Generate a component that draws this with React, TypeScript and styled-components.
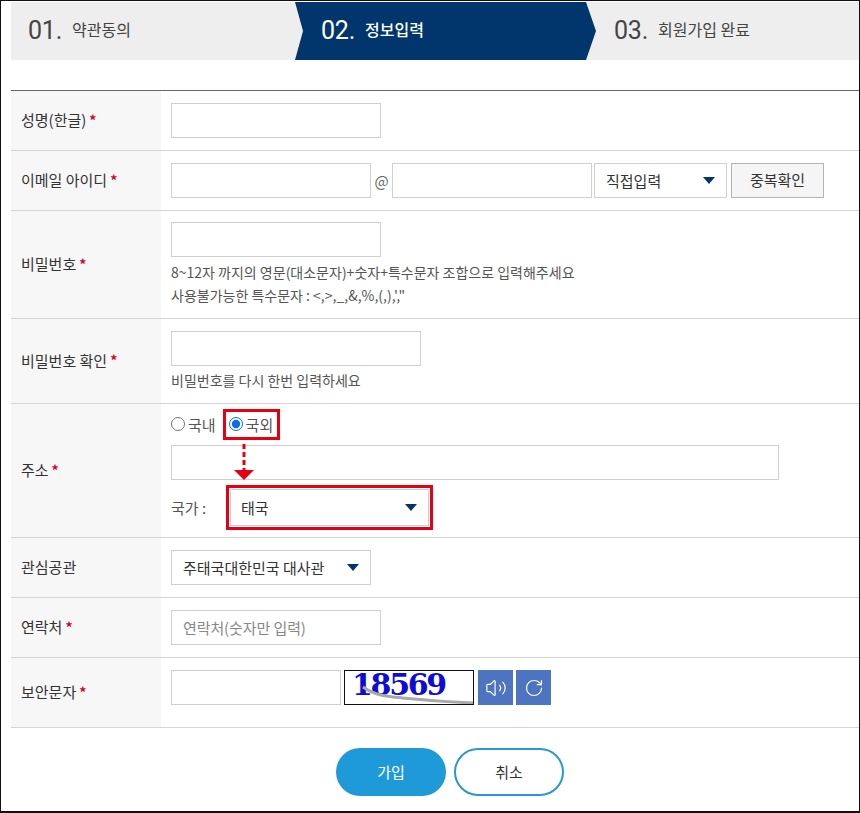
import React from 'react';
import styled, { createGlobalStyle } from 'styled-components';
import { RotateCw, Volume2 } from 'lucide-react';

const KR = `"Noto Sans CJK KR", "Noto Sans", sans-serif`;

const GlobalStyle = createGlobalStyle`
  html, body {
    margin: 0;
    padding: 0;
    background: #fff;
  }
  * {
    box-sizing: border-box;
  }
`;

export default function App() {
  return (
    <Page>
      <GlobalStyle />
      <Steps>
        <Step $width="284px">
          <StepNum>01.</StepNum>
          <StepName>약관동의</StepName>
        </Step>
        <ActiveStep>
          <StepNum>02.</StepNum>
          <ActiveName>정보입력</ActiveName>
        </ActiveStep>
        <LastStep>
          <StepNum>03.</StepNum>
          <StepName>회원가입 완료</StepName>
        </LastStep>
      </Steps>

      <Form>
        <Row $height="60px">
          <Label>성명(한글)<Star>*</Star></Label>
          <Cell>
            <TextInput $width="210px" />
          </Cell>
        </Row>

        <Row $height="60px">
          <Label>이메일 아이디<Star>*</Star></Label>
          <Cell>
            <Inline>
              <TextInput $width="200px" />
              <At>@</At>
              <TextInput $width="200px" />
              <Select $width="133px" $margin="0 4px 0 2px">
                <span>직접입력</span>
                <Arrow />
              </Select>
              <CheckButton>중복확인</CheckButton>
            </Inline>
          </Cell>
        </Row>

        <Row $height="108px">
          <Label>비밀번호<Star>*</Star></Label>
          <Cell>
            <TextInput $width="210px" />
            <Help $top="4px">8~12자 까지의 영문(대소문자)+숫자+특수문자 조합으로 입력해주세요</Help>
            <Help>사용불가능한 특수문자 : &lt;,&gt;,_,&amp;,%,(,),',"</Help>
          </Cell>
        </Row>

        <Row $height="85px">
          <Label>비밀번호 확인<Star>*</Star></Label>
          <Cell>
            <TextInput $width="250px" />
            <Help $top="3px">비밀번호를 다시 한번 입력하세요</Help>
          </Cell>
        </Row>

        <Row $height="134px">
          <Label>주소<Star>*</Star></Label>
          <AddressCell>
            <RadioLine>
              <RadioLabel>
                <Radio type="radio" name="addr" />
                국내
              </RadioLabel>
              <RadioLabel>
                <Radio type="radio" name="addr" defaultChecked />
                국외
              </RadioLabel>
              <RadioMark />
            </RadioLine>
            <TextInput $width="608px" />
            <CountryLine>
              <CountryLabel>국가 :</CountryLabel>
              <CountryMark>
                <Select $width="199px" $height="37px">
                  <CountryName>태국</CountryName>
                  <Arrow />
                </Select>
              </CountryMark>
            </CountryLine>
            <DownArrow width="20" height="37" viewBox="0 0 20 37">
              <line x1="10" y1="0" x2="10" y2="26" stroke="#e3000f" strokeWidth="3" strokeDasharray="5 3" />
              <polygon points="0,26 20,26 10,36" fill="#e3000f" />
            </DownArrow>
          </AddressCell>
        </Row>

        <Row $height="60px">
          <Label>관심공관</Label>
          <Cell>
            <Select $width="200px">
              <span>주태국대한민국 대사관</span>
              <Arrow />
            </Select>
          </Cell>
        </Row>

        <Row $height="60px">
          <Label>연락처<Star>*</Star></Label>
          <Cell>
            <TextInput $width="210px" placeholder="연락처(숫자만 입력)" />
          </Cell>
        </Row>

        <Row $height="70px">
          <Label>보안문자<Star>*</Star></Label>
          <CaptchaCell>
            <TextInput $width="170px" />
            <Captcha>
              <CaptchaText>18569</CaptchaText>
              <CaptchaNoise viewBox="0 0 128 33" preserveAspectRatio="none">
                <path d="M18 16 C 26 22, 36 25, 48 26 S 84 30, 128 32" fill="none" stroke="#a9a9a9" strokeWidth="3" />
              </CaptchaNoise>
            </Captcha>
            <IconButton aria-label="소리">
              <Volume2 size={22} strokeWidth={1.3} />
            </IconButton>
            <IconButton aria-label="새로고침">
              <RotateCw size={20} strokeWidth={1.4} />
            </IconButton>
          </CaptchaCell>
        </Row>
      </Form>

      <Actions>
        <PrimaryButton>가입</PrimaryButton>
        <CancelButton>취소</CancelButton>
      </Actions>
    </Page>
  );
}

const Page = styled.div`
  width: 860px;
  height: 813px;
  padding: 1px 0 2px 10px;
  border-top: 1px solid #111;
  border-left: 1px solid #111;
  border-right: 1px solid #111;
  border-bottom: 2px solid #111;
  font-family: ${KR};
  overflow: hidden;
`;

const Steps = styled.div`
  display: flex;
  height: 58px;
  background: #eeeeee;
  margin-right: -1px;
`;

interface StepProps {
  $width: string;
}
const Step = styled.div<StepProps>`
  display: flex;
  align-items: center;
  width: ${({ $width }) => $width};
  padding: 0 0 2px 17px;
  color: #444;
`;

const ActiveStep = styled.div`
  display: flex;
  align-items: center;
  width: 301px;
  margin-right: -10px;
  padding: 0 0 2px 26px;
  color: #fff;
  background: #00366b;
  clip-path: polygon(0 0, 291px 0, 100% 50%, 291px 100%, 0 100%, 8px 50%);
  position: relative;
`;

const LastStep = styled.div`
  display: flex;
  align-items: center;
  flex: 1;
  padding: 0 0 2px 28px;
  color: #444;
`;

const StepNum = styled.span`
  font-family: Roboto, sans-serif;
  font-weight: 400;
  font-size: 25px;
  letter-spacing: -0.2px;
  margin-right: 10px;
`;

const StepName = styled.span`
  font-size: 16px;
  margin-bottom: 3px;
`;

const ActiveName = styled(StepName)`
  font-weight: 500;
`;

const Form = styled.div`
  margin-top: 30px;
  margin-right: -1px;
  border-top: 1px solid #666;
`;

interface RowProps {
  $height: string;
}
const Row = styled.div<RowProps>`
  display: flex;
  height: ${({ $height }) => $height};
  border-bottom: 1px solid #d5d5d5;
`;

const Label = styled.div`
  display: flex;
  align-items: center;
  width: 150px;
  padding: 0 0 2px 10px;
  background: #f7f7f7;
  font-size: 15px;
  color: #333;
`;

const Star = styled.span`
  color: #d5002b;
  margin-left: 3px;
  font-size: 14px;
  font-weight: 700;
`;

const Cell = styled.div`
  display: flex;
  flex-direction: column;
  justify-content: center;
  align-items: flex-start;
  flex: 1;
  padding-left: 10px;
`;

const AddressCell = styled.div`
  position: relative;
  flex: 1;
  padding: 5px 0 0 10px;
`;

const CaptchaCell = styled.div`
  display: flex;
  align-items: flex-start;
  flex: 1;
  padding: 12px 0 0 10px;
`;

const Inline = styled.div`
  display: flex;
  align-items: center;
`;

interface TextInputProps {
  $width: string;
}
const TextInput = styled.input<TextInputProps>`
  display: block;
  width: ${({ $width }) => $width};
  height: 35px;
  padding: 0 11px;
  border: 1px solid #d0d0d0;
  background: #fff;
  font-family: ${KR};
  font-size: 15px;
  letter-spacing: -0.1px;
  outline: none;

  &::placeholder {
    color: #888;
  }
`;

const At = styled.span`
  width: 21px;
  text-align: center;
  font-size: 15px;
  color: #666;
`;

interface SelectProps {
  $width: string;
  $height?: string;
  $margin?: string;
}
const Select = styled.div<SelectProps>`
  display: flex;
  align-items: center;
  justify-content: space-between;
  width: ${({ $width }) => $width};
  height: ${({ $height }) => $height || '35px'};
  margin: ${({ $margin }) => $margin || '0'};
  padding: 0 11px;
  border: 1px solid #d0d0d0;
  background: #fff;
  font-size: 15px;
  color: #333;
`;

const Arrow = styled.i`
  width: 0;
  height: 0;
  border-left: 6px solid transparent;
  border-right: 6px solid transparent;
  border-top: 7px solid #00366b;
`;

const CheckButton = styled.button`
  width: 93px;
  height: 35px;
  padding: 0 0 2px;
  border: 1px solid #b4b4b4;
  background: #f5f5f5;
  font-family: ${KR};
  font-size: 15px;
  color: #333;
`;

interface HelpProps {
  $top?: string;
}
const Help = styled.p<HelpProps>`
  margin: ${({ $top }) => $top || '0'} 0 0;
  font-size: 14px;
  line-height: 23px;
  color: #555;
`;

const RadioLine = styled.div`
  position: relative;
  display: flex;
  align-items: center;
  gap: 13px;
  height: 30px;
  margin-bottom: 6px;
`;

const RadioLabel = styled.label`
  display: flex;
  align-items: center;
  font-size: 15px;
  color: #555;
`;

const Radio = styled.input`
  width: 14px;
  height: 14px;
  margin: 0 3px 0 0;
  accent-color: #0b6fe0;
`;

// red guide marks drawn over the form
const RadioMark = styled.div`
  position: absolute;
  left: 52px;
  top: 0;
  width: 57px;
  height: 31px;
  border: 3px solid #e60012;
`;

const DownArrow = styled.svg`
  position: absolute;
  left: 73px;
  top: 40px;
`;

const CountryLine = styled.div`
  display: flex;
  align-items: center;
  margin-top: 5px;
`;

const CountryLabel = styled.span`
  width: 55px;
  font-size: 15px;
  color: #555;
`;

const CountryMark = styled.div`
  padding: 1px;
  border: 3px solid #e60012;
`;

const CountryName = styled.span`
  margin-left: -1px;
`;

const Captcha = styled.div`
  position: relative;
  width: 130px;
  height: 35px;
  margin: 0 4px 0 3px;
  padding-left: 7px;
  border: 1px solid #111;
  background: #fff;
`;

const CaptchaText = styled.div`
  font-family: "DejaVu Serif", serif;
  font-weight: 700;
  font-size: 30px;
  line-height: 28px;
  letter-spacing: -2.3px;
  color: #0c0cd6;
`;

const CaptchaNoise = styled.svg`
  position: absolute;
  left: 0;
  top: 0;
  width: 100%;
  height: 100%;
`;

const IconButton = styled.button`
  display: flex;
  align-items: center;
  justify-content: center;
  width: 35px;
  height: 35px;
  margin-right: 3px;
  padding: 0;
  border: 0;
  background: #4d74c1;
  color: #fff;
`;

const Actions = styled.div`
  display: flex;
  justify-content: center;
  gap: 8px;
  margin-top: 20px;
  padding-left: 30px;
`;

const PrimaryButton = styled.button`
  width: 110px;
  height: 48px;
  padding: 0 0 2px;
  border: 0;
  border-radius: 24px;
  background: #1f9ad9;
  font-family: ${KR};
  font-size: 15px;
  color: #fff;
`;

const CancelButton = styled.button`
  width: 110px;
  height: 48px;
  padding: 0 0 2px;
  border: 2px solid #2a97d1;
  border-radius: 24px;
  background: #fff;
  font-family: ${KR};
  font-size: 15px;
  color: #333;
`;
